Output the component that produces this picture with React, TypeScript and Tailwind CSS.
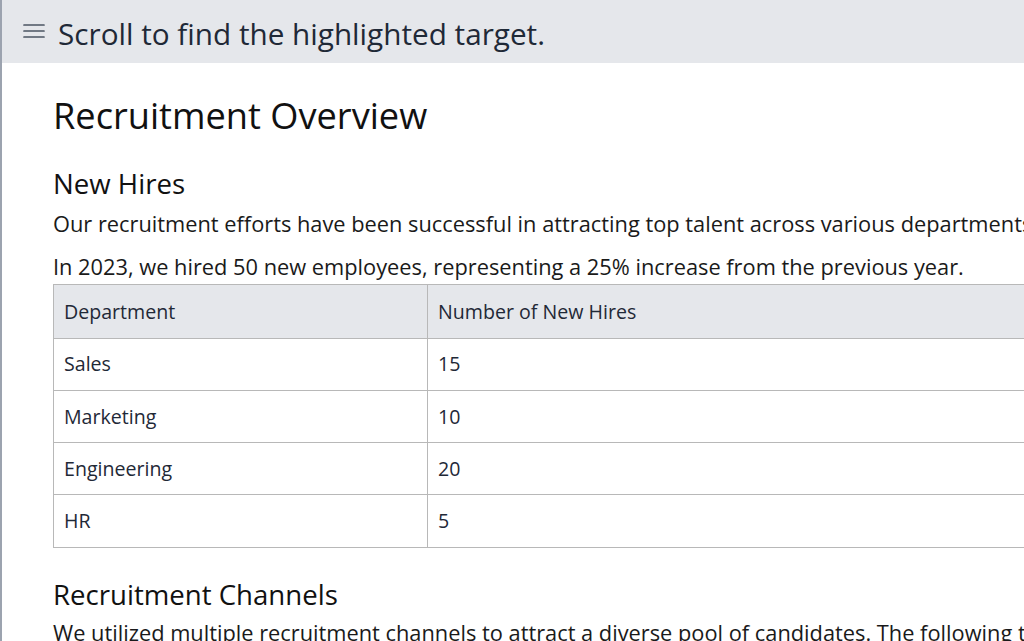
import React from "react";

const rows = [
  { dept: "Sales", hires: "15" },
  { dept: "Marketing", hires: "10" },
  { dept: "Engineering", hires: "20" },
  { dept: "HR", hires: "5" },
];

export default function App() {
  return (
    <div
      className="h-[641px] w-[1024px] overflow-hidden border-l-2 border-[#9ca3af] bg-white text-[#111111]"
      style={{ fontFamily: '"Open Sans", "Noto Sans", Arial, sans-serif' }}
    >
      {/* top bar */}
      <div className="flex h-[63px] items-center gap-[13px] bg-[#e5e7eb] pl-[21px]">
        <svg width="22" height="16" viewBox="0 0 22 16" className="-mt-[1px] text-[#4b5563]">
          <path d="M1 2h20M1 8h20M1 14h20" stroke="currentColor" strokeWidth="1.7" strokeLinecap="round" />
        </svg>
        <span className="mt-[4px] whitespace-nowrap text-[29.7px] leading-none text-[#1f2937]">
          Scroll to find the highlighted target.
        </span>
      </div>

      <div className="w-[1300px] pl-[51px] pt-[28px]">
        <h1 className="text-[36.2px] leading-[48px] whitespace-nowrap">Recruitment Overview</h1>
        <h2 className="mt-[26px] text-[27.6px] leading-[36px] whitespace-nowrap">New Hires</h2>
        <p className="mt-[7px] text-[21.8px] leading-[32px] whitespace-nowrap text-[#1a1a1a]">
          Our recruitment efforts have been successful in attracting top talent across various departments.
        </p>
        <p className="mt-[11px] text-[21.8px] leading-[32px] whitespace-nowrap text-[#1a1a1a]">
          In 2023, we hired 50 new employees, representing a 25% increase from the previous year.
        </p>

        <table className="mt-[1px] w-[1000px] border-collapse text-[19.6px] text-[#1f2937]">
          <thead>
            <tr className="h-[53.5px] bg-[#e5e7eb]">
              <th className="w-[374px] border border-[#b8b8b8] px-[10px] text-left font-normal">Department</th>
              <th className="border border-[#b8b8b8] px-[10px] text-left font-normal">Number of New Hires</th>
            </tr>
          </thead>
          <tbody>
            {rows.map((r) => (
              <tr key={r.dept} className="h-[52.3px]">
                <td className="border border-[#b8b8b8] px-[10px]">{r.dept}</td>
                <td className="border border-[#b8b8b8] px-[10px]">{r.hires}</td>
              </tr>
            ))}
          </tbody>
        </table>

        <h2 className="mt-[28px] text-[27.6px] leading-[36px] whitespace-nowrap">Recruitment Channels</h2>
        <p className="mt-[5px] text-[21.8px] leading-[32px] whitespace-nowrap text-[#1a1a1a]">
          We utilized multiple recruitment channels to attract a diverse pool of candidates. The following table shows the breakdown.
        </p>
      </div>
    </div>
  );
}
